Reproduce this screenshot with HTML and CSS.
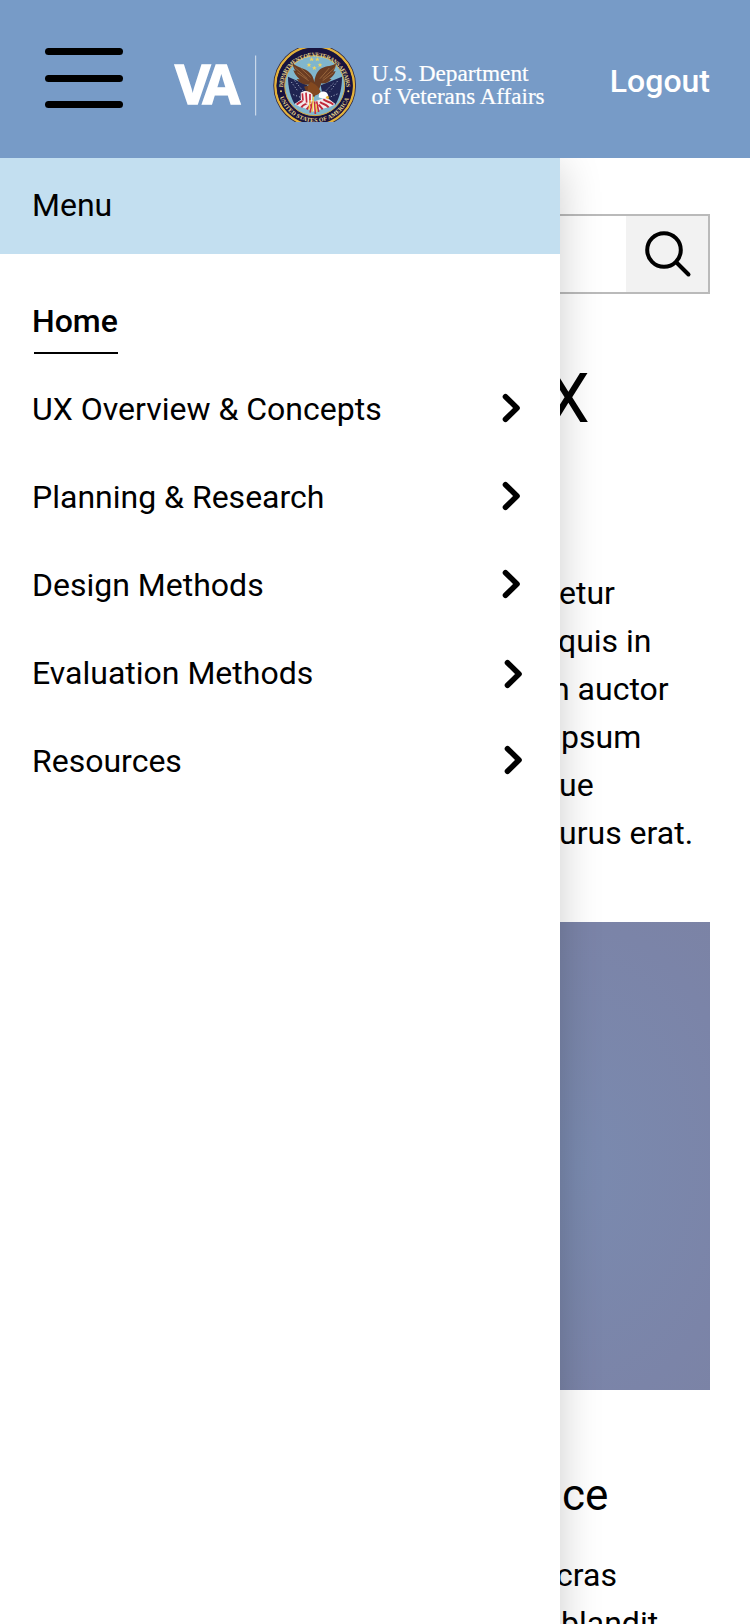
FILE: index.html
```html
<!DOCTYPE html>
<html lang="en">
<head>
  <meta charset="UTF-8">
  <meta name="viewport" content="width=device-width, initial-scale=1.0">
  <title>VA UX Menu</title>
  <link rel="stylesheet" href="styles.css">
</head>
<body>
  <header>
    <button class="hamburger" aria-label="Menu">
      <span></span>
      <span></span>
      <span></span>
    </button>

    <svg class="logo" width="372" height="74" viewBox="0 0 372 74">
      <text class="logo-va" x="1 28.5" y="55.5">VA</text>
      <rect x="81" y="7.5" width="1.2" height="60" fill="#c9d8ea"/>

      <!-- seal -->
      <g transform="translate(-174 -48) scale(.33333)">
        <circle cx="944" cy="257" r="124" fill="#2a2440"/>
        <circle cx="944" cy="257" r="118" fill="none" stroke="#e3b23c" stroke-width="7"/>
        <circle cx="944" cy="257" r="114" fill="#17133f"/>
        <circle cx="944" cy="257" r="90" fill="#80b6cd" stroke="#d3a93f" stroke-width="3"/>
        <path id="ring-top" d="M849 265a95 95 0 0 1 190 0" fill="none"/>
        <path id="ring-bottom" d="M838 286a110 110 0 0 0 212 0" fill="none"/>
        <text class="seal-text"><textPath href="#ring-top" textLength="292" startOffset="3">DEPARTMENT OF VETERANS AFFAIRS</textPath></text>
        <text class="seal-text"><textPath href="#ring-bottom" textLength="270" startOffset="6">UNITED STATES OF AMERICA</textPath></text>
        <circle cx="843" cy="274" r="3" fill="#e8d27a"/>
        <circle cx="1045" cy="274" r="3" fill="#e8d27a"/>

        <!-- stars -->
        <g fill="#f3d55b">
          <path id="star" d="M935 171l2 5h5l-4 3 2 5-5-3-5 3 2-5-4-3h5z"/>
          <use href="#star" x="17"/>
          <use href="#star" x="-8" y="17"/>
          <use href="#star" x="25" y="17"/>
          <use href="#star" x="8" y="26"/>
        </g>

        <!-- flags -->
        <path d="M864 230l58 26-6 34-32 22c-12-20-20-48-20-82z" fill="#1f2452"/>
        <path d="M1026 230l-64 26 8 40 36 18c14-24 20-52 20-84z" fill="#1f2452"/>
        <path d="M874 246l20 28M884 242l24 30M880 284l22 8M1012 244l-22 30M1000 250l-22 22M1012 282l-24 10" stroke="#b9c3d8" stroke-width="3" stroke-dasharray="3 6" fill="none"/>
        <path d="M884 312l32-22 28 14 36-12 26 20c-18 14-40 10-62 24-18-12-40-10-60-24z" fill="#f1eaea"/>
        <path d="M890 314c12-12 18-8 30-20M904 322c8-12 18-8 28-20M920 328l14-16M1000 314c-12-12-18-6-30-16M986 322c-10-12-16-8-26-16M968 328l-12-14" stroke="#c02a3b" stroke-width="6" fill="none"/>

        <!-- eagle -->
        <path d="M932 254c-18 2-34-4-42-17l9 1c-10-9-16-18-19-28l7 3c-6-8-9-15-9-23 16 14 36 15 48 25 11 8 15 20 17 32 2-18 8-34 22-42 14-8 32-5 43-15-1 10-4 18-8 25l7-2c-4 12-11 19-19 23l7 1c-9 11-20 14-31 13l-8 22-14 20-22-14-8-18z" fill="#6a3c22"/>
        <path d="M884 202l38 34M892 218l34 24M902 204l30 28M1006 202l-38 34M1000 218l-32 24M988 204l-28 32" stroke="#99653b" stroke-width="3" fill="none"/>
        <path d="M932 246c12 4 24 14 30 30-8 10-22 14-34 8-8-10-6-28 4-38z" fill="#84491f"/>
        <path d="M958 280c10-10 24-6 27 7-5 9-19 11-29 5z" fill="#fff"/>
        <path d="M981 287l7 3-3 8-8-4z" fill="#efb82f"/>
        <path d="M902 278c12-8 26-6 36 6l-4 28c-18 2-28-8-32-16z" fill="#f7efef"/>
        <path d="M907 280l2 22M918 278l2 30M930 282v28" stroke="#c4283c" stroke-width="5" fill="none"/>
        <path d="M938 304l-8 34M944 304l2 38M950 304l6 32" stroke="#c32b3c" stroke-width="5" fill="none"/>
        <path d="M940 290l-3 46M931 300l-4 28M948 312l2 24" stroke="#f1cf4d" stroke-width="4" fill="none"/>
      </g>

      <text class="logo-name" x="197.5" y="33.3" textLength="157" lengthAdjust="spacingAndGlyphs">U.S. Department</text>
      <text class="logo-name" x="197.5" y="56.3" textLength="173" lengthAdjust="spacingAndGlyphs">of Veterans Affairs</text>
    </svg>

    <a class="logout" href="#">Logout</a>
  </header>

  <main>
    <div class="search">
      <button aria-label="Search">
        <svg width="50" height="50" viewBox="0 0 50 50" fill="none" stroke="#000" stroke-width="4">
          <circle cx="22" cy="22" r="16.8"/>
          <path d="M34.5 34.5L46.5 46.5" stroke-linecap="round"/>
        </svg>
      </button>
    </div>

    <h1>X</h1>

    <p class="intro">
      <span class="line">etur</span>
      <span class="line back">quis in</span>
      <span class="line cut">n auctor</span>
      <span class="line indent">psum</span>
      <span class="line">ue</span>
      <span class="line">urus erat.</span>
    </p>

    <div class="photo"></div>

    <h2>ce</h2>
    <p>
      <span class="line cras">cras</span>
      <span class="line indent">blandit</span>
    </p>
  </main>

  <nav class="drawer">
    <div class="drawer-title">Menu</div>
    <ul>
      <li><a class="active" href="#">Home</a></li>
      <li>
        <a href="#">UX Overview &amp; Concepts</a>
        <svg class="chevron" viewBox="0 0 20 30"><path d="M4.5 3.7L16 15L4.5 26.3"/></svg>
      </li>
      <li>
        <a href="#">Planning &amp; Research</a>
        <svg class="chevron" viewBox="0 0 20 30"><path d="M4.5 3.7L16 15L4.5 26.3"/></svg>
      </li>
      <li>
        <a href="#">Design Methods</a>
        <svg class="chevron" viewBox="0 0 20 30"><path d="M4.5 3.7L16 15L4.5 26.3"/></svg>
      </li>
      <li class="wide">
        <a href="#">Evaluation Methods</a>
        <svg class="chevron low" viewBox="0 0 20 30"><path d="M4.5 3.7L16 15L4.5 26.3"/></svg>
      </li>
      <li class="wide">
        <a href="#">Resources</a>
        <svg class="chevron" viewBox="0 0 20 30"><path d="M4.5 3.7L16 15L4.5 26.3"/></svg>
      </li>
    </ul>
  </nav>
</body>
</html>
```
FILE: styles.css
```css
* {
  box-sizing: border-box;
}

body {
  position: relative;
  margin: 0;
  height: 1624px;
  overflow: hidden;
  font-family: Roboto, sans-serif;
  font-size: 32px;
  line-height: 48px;
  color: #000;
  background-color: #fff;
}

a {
  color: inherit;
  text-decoration: none;
}

button {
  padding: 0;
  border: none;
  background: none;
}

/* header */
header {
  position: relative;
  z-index: 3;
  display: flex;
  align-items: flex-start;
  height: 158px;
  padding: 48px 40px 0 45px;
  background-color: #779bc7;
}

.hamburger {
  display: flex;
  flex-direction: column;
  justify-content: space-between;
  width: 78px;
  height: 60px;
}

.hamburger span {
  height: 7px;
  border-radius: 4px;
  background-color: #000;
}

.logo {
  margin-left: 51px;
}

.logo-va {
  font-family: "Open Sans", sans-serif;
  font-size: 54.5px;
  font-weight: 700;
  fill: #fff;
  stroke: #fff;
  stroke-width: 1.5px;
}

.logo-name {
  font-family: "Liberation Serif", serif;
  font-size: 23.5px;
  fill: #fff;
  stroke: #fff;
  stroke-width: 0.2px;
}

.seal-text {
  font-family: "Liberation Serif", serif;
  font-size: 18px;
  font-weight: bold;
  fill: #e6d38c;
}

.logout {
  margin-top: 9px;
  margin-left: auto;
  font-weight: 500;
  color: #fff;
}

/* page */
main {
  padding: 56px 40px 0;
}

.search {
  display: flex;
  justify-content: flex-end;
  height: 80px;
  border: 2px solid #bababa;
}

.search button {
  display: flex;
  width: 82px;
  padding: 12px 0 0 16px;
  background-color: #f2f2f2;
}

h1 {
  margin: 65px 0 0 507px;
  font-size: 68px;
  font-weight: 400;
  line-height: 80px;
}

h2 {
  margin: 75px 0 26px 522px;
  font-size: 44px;
  font-weight: 400;
  line-height: 60px;
}

p {
  margin: 0 0 0 519px;
}

.intro {
  margin-top: 130px;
}

.line {
  display: block;
  white-space: nowrap;
}

.line.back {
  margin-left: -1px;
}

.line.cras {
  margin-left: -3px;
}

.line.cut {
  margin-left: -7px;
}

.line.indent {
  margin-left: 2px;
}

.photo {
  height: 468px;
  margin-top: 65px;
  background: radial-gradient(ellipse 320px 480px at 540px 52%, #7a8aaf, #7b84a8 50%, #7c819f);
}

/* menu */
.drawer {
  position: absolute;
  z-index: 2;
  top: 158px;
  left: 0;
  width: 560px;
  height: 1500px;
  background-color: #fff;
  box-shadow: 0 8px 40px rgba(0, 0, 0, 0.2);
}

.drawer-title {
  height: 96px;
  padding-left: 32px;
  line-height: 94px;
  background-color: #c3dff0;
}

.drawer ul {
  margin: 0;
  padding: 23px 39px 0 32px;
  list-style: none;
}

.drawer li {
  display: flex;
  justify-content: space-between;
  align-items: center;
  height: 88px;
}

.drawer li.wide {
  margin-right: -2px;
}

.drawer a.active {
  padding: 9px 0;
  font-weight: 500;
  background: linear-gradient(#000, #000) 2px 100% / 84px 2px no-repeat;
}

.chevron {
  width: 20px;
  height: 30px;
  margin-top: -2px;
  fill: none;
  stroke: #000;
  stroke-width: 5.6;
  stroke-linecap: round;
  stroke-linejoin: round;
}

.chevron.low {
  margin-top: 2px;
}
```
